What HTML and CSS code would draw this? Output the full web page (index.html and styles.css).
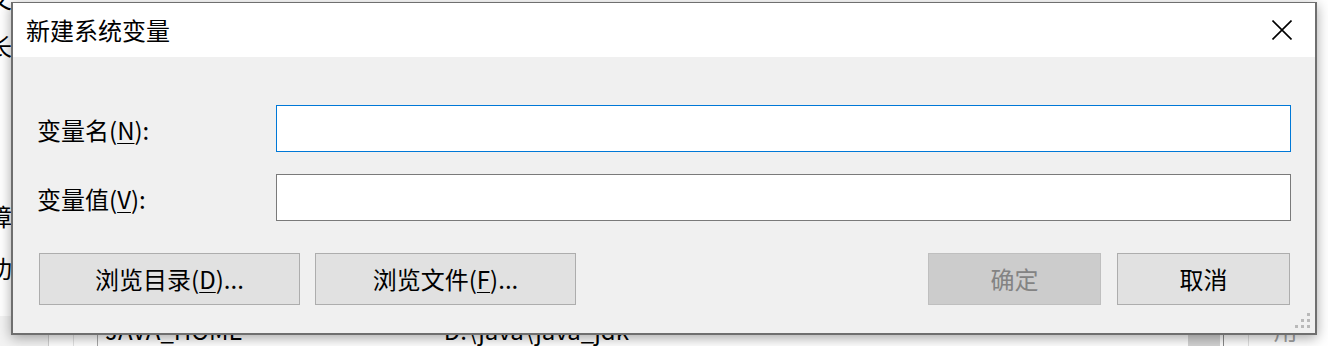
FILE: index.html
```html
<!DOCTYPE html>
<html lang="zh-CN">
<head>
    <meta charset="UTF-8">
    <title>新建系统变量</title>
    <link rel="stylesheet" href="styles.css">
</head>
<body>
    <div class="behind">
        <div class="side">
            <span class="c1">文</span>
            <span class="c2">长</span>
            <span class="c3">障</span>
            <span class="c4">功</span>
        </div>
        <div class="list-row">
            <div class="cell gutter"></div>
            <div class="cell mid"></div>
            <div class="cell mark"></div>
            <div class="cell name">JAVA_HOME</div>
            <div class="cell value">D:\java\java_jdk</div>
            <div class="cell thumb"></div>
            <div class="cell edge"></div>
            <div class="cell edge2"></div>
            <div class="cell apply">用(A)</div>
        </div>
    </div>

    <div class="dialog">
        <div class="titlebar">
            <span class="title">新建系统变量</span>
            <span class="close">
                <svg width="20" height="20" viewBox="0 0 20 20">
                    <path d="M0.5 0.5 L19.5 19.5 M19.5 0.5 L0.5 19.5" stroke="#000" stroke-width="1.6" fill="none"/>
                </svg>
            </span>
        </div>
        <div class="content">
            <div class="fields">
                <label class="label">变量名(<u>N</u>):</label>
                <div class="input active"></div>
                <label class="label">变量值(<u>V</u>):</label>
                <div class="input"></div>
            </div>
            <div class="buttons">
                <button class="btn wide">浏览目录(<u>D</u>)...</button>
                <button class="btn wide">浏览文件(<u>F</u>)...</button>
                <button class="btn narrow disabled push">确定</button>
                <button class="btn narrow">取消</button>
            </div>
        </div>
        <svg class="grip" width="15" height="15" viewBox="0 0 15 15">
            <rect x="12" y="0" width="3" height="3" fill="#b9b9b9"/>
            <rect x="6" y="6" width="3" height="3" fill="#b9b9b9"/>
            <rect x="12" y="6" width="3" height="3" fill="#b9b9b9"/>
            <rect x="0" y="12" width="3" height="3" fill="#b9b9b9"/>
            <rect x="6" y="12" width="3" height="3" fill="#b9b9b9"/>
            <rect x="12" y="12" width="3" height="3" fill="#b9b9b9"/>
        </svg>
    </div>
</body>
</html>
```

FILE: styles.css
```css
body {
    margin: 0;
    padding: 0;
    width: 1328px;
    height: 346px;
    overflow: hidden;
    position: relative;
    background-color: white;
    font-family: "Noto Sans CJK SC", sans-serif;
    font-size: 24px;
    color: black;
}
.behind {
    display: flex;
    flex-direction: column;
    height: 346px;
}
.side {
    display: flex;
    flex-direction: column;
    margin-left: -12px;
    line-height: 24px;
}
.side .c1 { margin-top: -14px; }
.side .c2 { margin-top: 24px; }
.side .c3 { margin-top: 146px; }
.side .c4 { margin-top: 28px; }
.list-row {
    margin-top: auto;
    display: flex;
    height: 30px;
    line-height: 28px;
}
.cell {
    box-sizing: border-box;
    height: 100%;
}
.gutter {
    width: 49px;
    background: #f3f3f3;
    border-right: 1px solid #cfcfcf;
}
.mid {
    width: 26px;
    border-right: 1px solid #e2e2e2;
}
.mark {
    width: 24px;
    border-right: 1px solid #a8a8a8;
}
.name {
    width: 348px;
    padding-left: 7px;
}
.value {
    width: 750px;
}
.thumb {
    width: 32px;
    background: #d4d4d4;
}
.edge {
    width: 4px;
    border-right: 1px solid #8a8a8a;
}
.edge2 {
    width: 25px;
    border-right: 1px solid #e0e0e0;
}
.apply {
    padding-left: 25px;
    color: #a0a0a0;
}

.dialog {
    position: absolute;
    left: 11px;
    top: 2px;
    width: 1306px;
    height: 333px;
    box-sizing: border-box;
    border: 2px solid #6f6f6f;
    border-top-width: 1px;
    background-color: #f0f0f0;
    box-shadow: 0 3px 12px rgba(0, 0, 0, 0.35);
    display: flex;
    flex-direction: column;
}
.titlebar {
    height: 54px;
    flex: none;
    display: flex;
    justify-content: space-between;
    align-items: center;
    background-color: white;
    padding-left: 13px;
}
.title {
    line-height: 24px;
}
.close {
    width: 66px;
    height: 54px;
    display: flex;
    justify-content: center;
    align-items: center;
}
.close svg {
    display: block;
}
.content {
    flex: 1;
    padding: 48px 24px 0 24px;
}
.fields {
    display: grid;
    grid-template-columns: 239px 1fr;
    grid-template-rows: 47px 47px;
    row-gap: 22px;
    align-items: center;
}
.label {
    line-height: 24px;
    padding-top: 3px;
}
.label u, .btn u {
    text-underline-offset: 3px;
    text-decoration-thickness: 1px;
}
.input {
    height: 47px;
    box-sizing: border-box;
    border: 1px solid #7a7a7a;
    background-color: white;
}
.input.active {
    border-color: #0078d7;
}
.buttons {
    display: flex;
    margin-top: 32px;
    padding-left: 2px;
    padding-right: 1px;
}
.btn {
    height: 52px;
    box-sizing: border-box;
    border: 1px solid #adadad;
    background-color: #e1e1e1;
    font-family: inherit;
    font-size: 24px;
    line-height: 24px;
    color: black;
    padding: 0;
}
.btn.wide {
    width: 261px;
    margin-right: 15px;
}
.btn.narrow {
    width: 173px;
}
.btn.push {
    margin-left: auto;
    margin-right: 16px;
}
.btn.disabled {
    background-color: #cccccc;
    border-color: #bfbfbf;
    color: #838383;
}
.grip {
    position: absolute;
    right: 5px;
    bottom: 5px;
}
```
